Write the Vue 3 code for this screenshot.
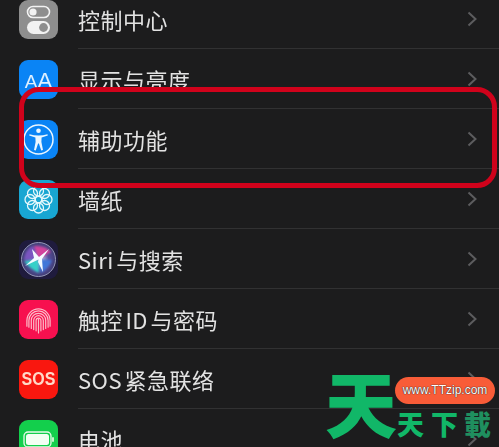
<script setup>
const rows = [
  { label: '控制中心', icon: 'control', bg: 'grey' },
  { label: '显示与亮度', icon: 'display', bg: 'blue' },
  { label: '辅助功能', icon: 'access', bg: 'blue' },
  { label: '墙纸', icon: 'wall', bg: 'cyan' },
  { label: 'Siri 与搜索', icon: 'siri', bg: 'siri' },
  { label: '触控 ID 与密码', icon: 'touch', bg: 'pink' },
  { label: 'SOS 紧急联络', icon: 'sos', bg: 'red' },
  { label: '电池', icon: 'battery', bg: 'green' }
]
const petals = [0, 45, 90, 135, 180, 225, 270, 315]
const prints = [2.4, 4.8, 7.2, 9.6, 11.6]
</script>

<template>
  <div class="screen">
    <div class="list">
      <div v-for="row in rows" :key="row.label" class="row">
        <div class="icon" :class="row.bg">
          <svg v-if="row.icon === 'control'" viewBox="0 0 39 39" class="art">
            <rect x="8.5" y="6.5" width="22" height="11" rx="5.5" fill="none" stroke="#f2f2f2" stroke-width="1.6" />
            <circle cx="14" cy="12" r="3.6" fill="#f2f2f2" />
            <rect x="8" y="21" width="23" height="13" rx="6.5" fill="#f2f2f2" />
            <circle cx="24.5" cy="27.5" r="4.4" fill="#8e8e8e" />
          </svg>
          <span v-else-if="row.icon === 'display'" class="aa"><span class="aa-small">A</span>A</span>
          <svg v-else-if="row.icon === 'access'" viewBox="0 0 39 39" class="art">
            <circle cx="19.5" cy="19.5" r="14.5" fill="none" stroke="#eaf6ff" stroke-width="1.5" />
            <circle cx="19.5" cy="10.8" r="2.3" fill="#eaf6ff" />
            <path d="M10.5 14.2 Q19.5 16.6 28.5 14.2 L28.8 15.6 L22.6 17.6 L22.4 22 L24 30 L22.2 30.4 L19.9 23.4 H19.1 L16.8 30.4 L15 30 L16.6 22 L16.4 17.6 L10.2 15.6 Z" fill="#eaf6ff" />
          </svg>
          <svg v-else-if="row.icon === 'wall'" viewBox="0 0 39 39" class="art">
            <g fill="none" stroke="#e4f7fb" stroke-width="1.3">
              <circle v-for="a in petals" :key="a" cx="19.5" cy="11" r="5" :transform="`rotate(${a} 19.5 19.5)`" />
              <circle cx="19.5" cy="19.5" r="3.2" />
            </g>
          </svg>
          <svg v-else-if="row.icon === 'siri'" viewBox="0 0 39 39" class="art">
            <defs>
              <radialGradient id="siriGlow" cx="50%" cy="50%" r="50%">
                <stop offset="0" stop-color="#e8f6ff" />
                <stop offset="0.6" stop-color="#58509f" />
                <stop offset="1" stop-color="#403d73" />
              </radialGradient>
            </defs>
            <circle cx="19.5" cy="19.5" r="17" fill="url(#siriGlow)" stroke="#9497b8" stroke-width="1" />
            <g class="siri-glow">
              <path d="M19.5 19.5 L5 21 Q11 29 20 33 Z" fill="#35d0c8" />
              <path d="M19.5 19.5 L32 12 Q26 5 15 6 Z" fill="#d2439c" />
              <path d="M19.5 19.5 L22 33 Q30 28 33 20 Z" fill="#3f77d8" />
              <path d="M19.5 19.5 L5 20 Q6 10 14 6 Z" fill="#7a55c0" />
            </g>
            <path d="M19.5 19.5 L6 26 L15 18 L13 9 L20 17 L30 9 L23 19 L24 32 L19 22 Z" fill="#f3fbff" />
          </svg>
          <svg v-else-if="row.icon === 'touch'" viewBox="0 0 39 39" class="art">
            <g fill="none" stroke="#fbbcc8" stroke-width="1.2" stroke-linecap="round">
              <path v-for="r in prints" :key="r" :d="`M${19.5 - r} ${32 - r * 0.5} V20.5 A${r} ${r} 0 0 1 ${19.5 + r} 20.5 V${32 - r * 0.5}`" />
              <path d="M19.5 19 V33" />
            </g>
          </svg>
          <span v-else-if="row.icon === 'sos'" class="sos">SOS</span>
          <svg v-else viewBox="0 0 39 39" class="art">
            <rect x="5" y="12" width="27" height="15" rx="4" fill="none" stroke="#e8fbe9" stroke-width="1.3" />
            <rect x="7" y="14" width="23" height="11" rx="2.5" fill="#f3fff3" />
            <rect x="33" y="17" width="2" height="5" rx="1" fill="#c8f3cb" />
          </svg>
        </div>
        <div class="body">
          <span class="label">{{ row.label }}</span>
          <svg class="chev" viewBox="0 0 10 16"><path d="M1.5 1.5 L8.5 8 L1.5 14.5" /></svg>
        </div>
      </div>
    </div>

    <div class="highlight"></div>

    <div class="mark">
      <span class="big">天</span>
      <span class="small">天</span>
      <span class="small second">下</span>
      <span class="small third">載</span>
      <span class="pill">www.TTzip.com</span>
    </div>
  </div>
</template>

<style>
html, body { margin: 0; background: #1c1c1d; }
</style>

<style scoped>
.screen {
  position: relative;
  width: 499px;
  height: 447px;
  overflow: hidden;
  background: #1c1c1d;
  font-family: "Noto Sans CJK SC", "Noto Sans", sans-serif;
}
.list { margin-top: -11px; padding-left: 19px; filter: blur(0.35px); }
.row { display: flex; align-items: center; height: 60px; }
.icon {
  flex: none;
  width: 39px;
  height: 39px;
  margin-right: 20px;
  border-radius: 9px;
  display: flex;
  align-items: center;
  justify-content: center;
  overflow: hidden;
}
.art { width: 39px; height: 39px; display: block; }
.grey { background: #8e8e8e; }
.blue { background: #0a84f5; }
.cyan { background: #18a6d2; }
.siri { background: #1f1b3d; }
.pink { background: #f7104f; }
.red { background: #f9170f; }
.green { background: #13cf4c; }
.aa { color: #dff0ff; font-size: 22px; font-family: "Liberation Sans", sans-serif; margin-top: 4px; }
.aa-small { font-size: 19px; }
.sos { color: #ffd9c8; font-size: 16px; font-weight: 700; font-family: "Liberation Sans", sans-serif; transform: scaleY(1.15); }
.siri-glow { filter: blur(1.2px); }
.body {
  flex: 1;
  height: 60px;
  box-sizing: border-box;
  border-bottom: 1px solid #313132;
  display: flex;
  align-items: center;
  justify-content: space-between;
  padding-right: 22px;
}
.label {
  color: #e2e2e2;
  font-size: 22px;
  letter-spacing: 0.5px;
  line-height: 1;
  word-spacing: -3px;
}
.chev { width: 10px; height: 16px; }
.chev path { fill: none; stroke: #5c5c5e; stroke-width: 2; }
.highlight {
  position: absolute;
  left: 19px;
  top: 87px;
  width: 478px;
  height: 101px;
  box-sizing: border-box;
  border: 5px solid #d0021b;
  border-radius: 20px;
  filter: blur(0.4px);
}
.mark {
  position: absolute;
  left: 0;
  top: 0;
  width: 499px;
  height: 447px;
  pointer-events: none;
}
.big {
  position: absolute;
  left: 325px;
  top: 365px;
  font-size: 72px;
  line-height: 1;
  font-weight: 900;
  color: #11b768;
}
.small {
  position: absolute;
  left: 397px;
  top: 410px;
  font-family: "Noto Sans CJK TC", sans-serif;
  font-size: 27px;
  line-height: 1;
  font-weight: 900;
  color: #11b768;
}
.second { left: 431px; }
.third { left: 464px; color: #1f8f5f; }
.pill {
  position: absolute;
  left: 395px;
  top: 377px;
  width: 100px;
  height: 27px;
  border-radius: 13.5px;
  background: #f85c38;
  color: #fff;
  font-family: "Liberation Sans", sans-serif;
  font-size: 12px;
  line-height: 27px;
  text-align: center;
  white-space: nowrap;
  text-shadow: 0 0 1px #222, 0 0 1px #222;
}
</style>
